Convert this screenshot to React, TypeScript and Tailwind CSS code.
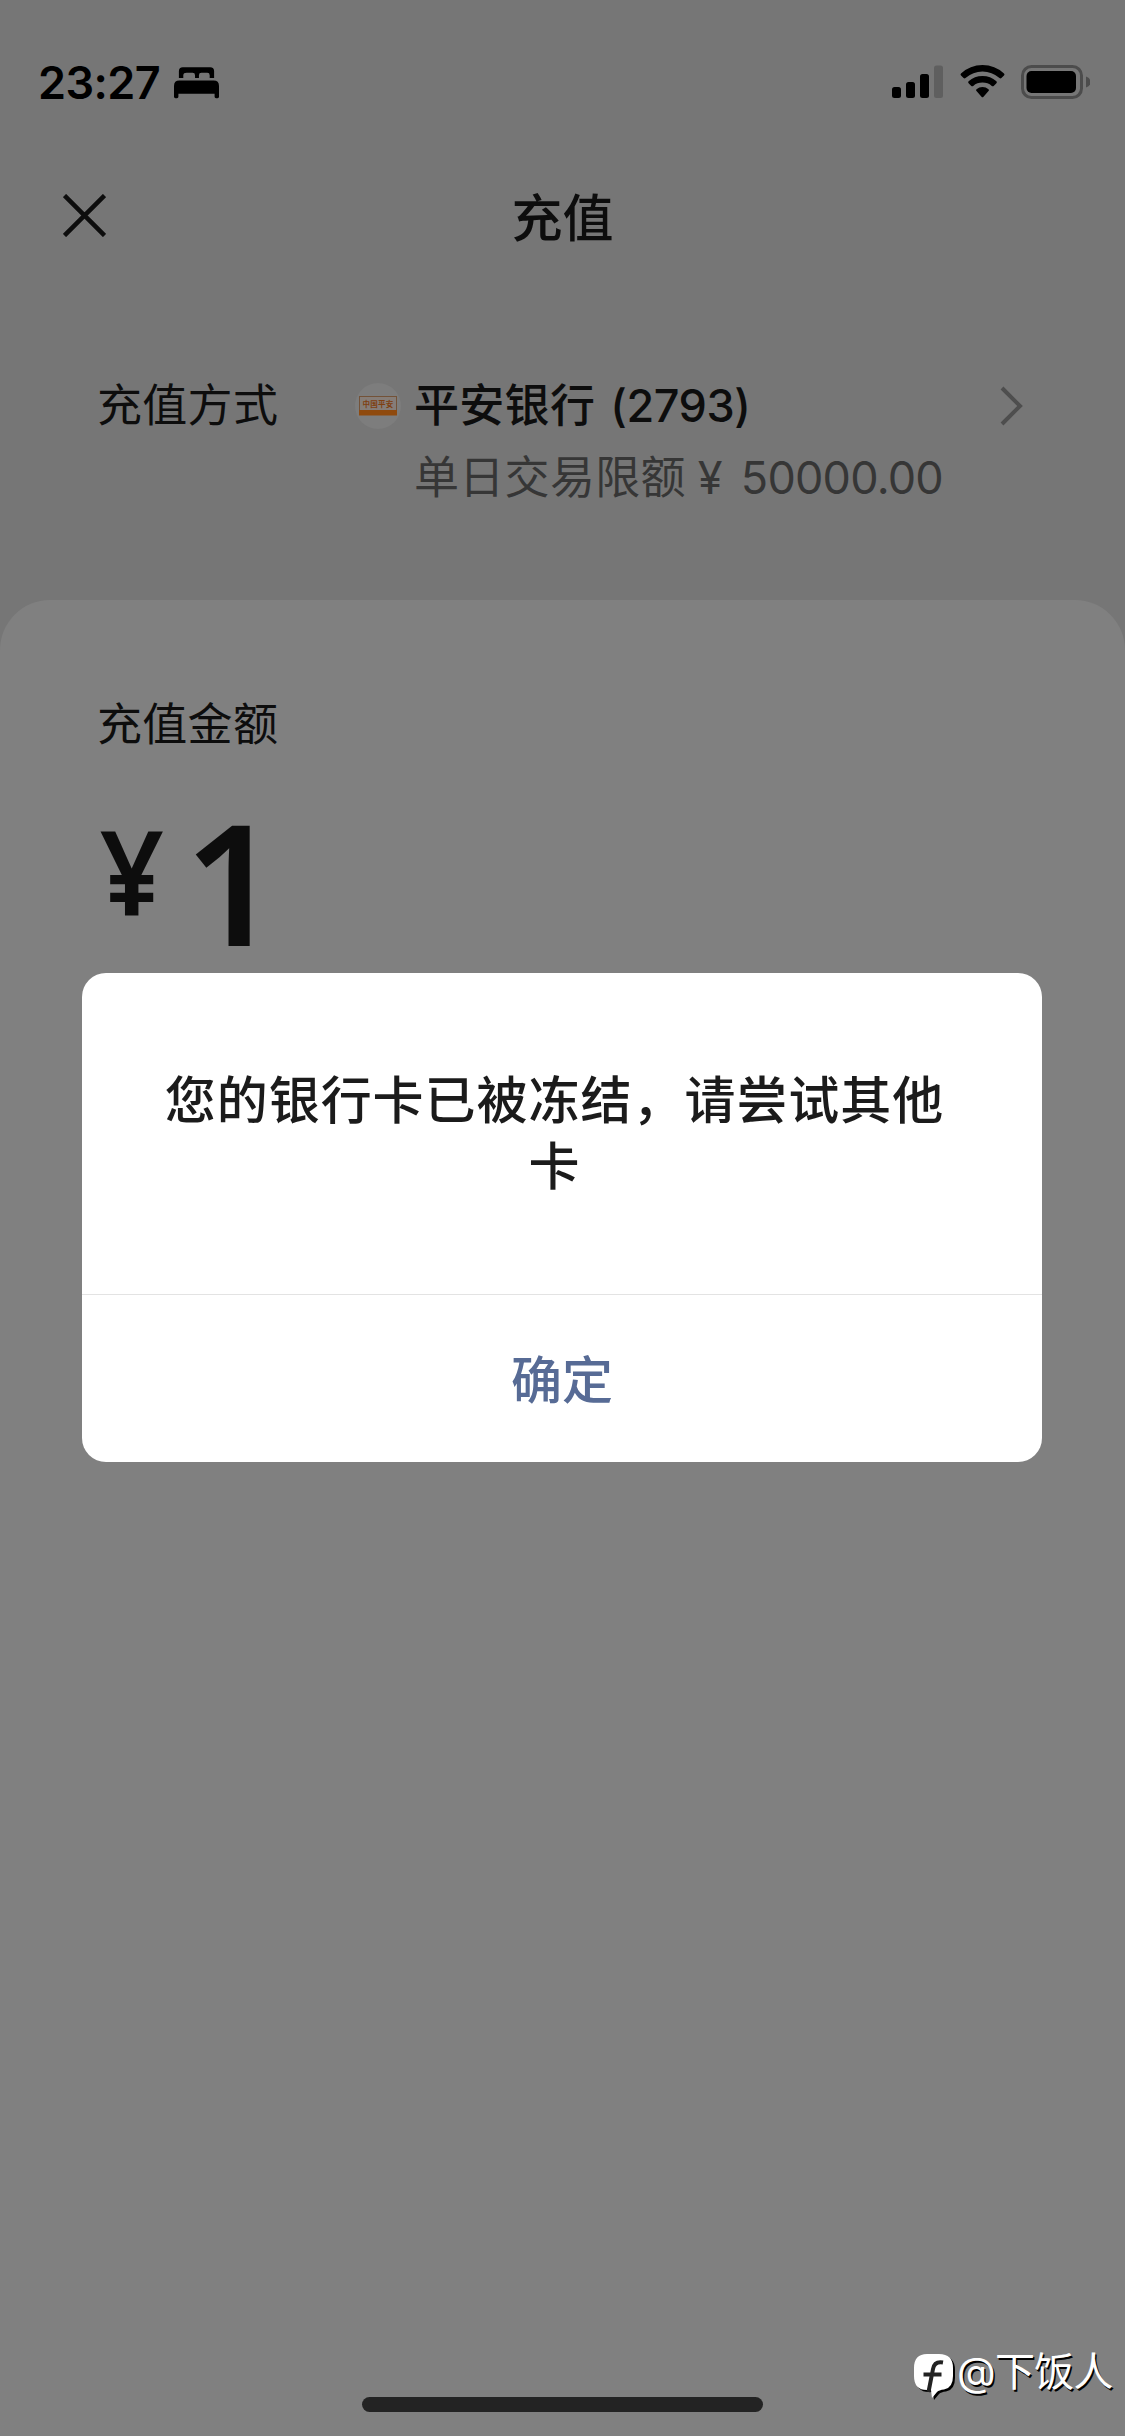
import clsx from "clsx";

const StatusBar = () => {
  return (
    <div className="flex h-[132px] items-start justify-between pt-[60px] pr-[35px] pl-[38px]">
      <div className="flex items-center">
        <span className="w-[136px] text-[45px] leading-[45px] font-semibold tracking-[-0.6px] text-black">23:27</span>
        <svg width="45" height="32" viewBox="0 0 46 32" fill="#000">
          <path d="M5 11V4q0-4 4-4h28q4 0 4 4v7h-4.500V8q0-2.500-2.500-2.500h-6q-2.500 0-2.500 2.500v3h-4V8q0-2.500-2.500-2.500h-6Q9.500 5.500 9.500 8v3z" />
          <path d="M0 30V19q0-5.500 5.500-5.500h35q5.500 0 5.500 5.500v11q0 1.500-1.500 1.500h-1.500q-1.500 0-1.500-1.500v-3H4.500v3q0 1.500-1.500 1.500H1.500Q0 31.500 0 30z" />
        </svg>
      </div>
      <div className="flex items-start pt-[4px]">
        <svg width="51" height="34" viewBox="0 0 51 34">
          <rect x="0" y="23" width="9" height="11" rx="2.500" />
          <rect x="14" y="18" width="9" height="16" rx="2.500" />
          <rect x="28" y="10" width="9" height="24" rx="2.500" />
          <rect x="42" y="1.500" width="9" height="32.500" rx="2.500" fill="#5f5f5f" />
        </svg>
        <svg className="ml-[17px]" width="45" height="34" viewBox="0 0 45 34" fill="#000">
          <path d="M1 9.500Q10 1 22.500 1T44 9.500q1 1 0 2l-2.600 2.600q-.9.900-1.900 0Q32 7.500 22.500 7.500T5.500 14.100q-1 .9-1.900 0L1 11.500q-1-1 0-2z" />
          <path d="M8.600 17.200Q14.500 12 22.500 12t13.900 5.200q1 1 0 2l-2.700 2.700q-.9.900-1.900 0-4-3.300-9.300-3.300t-9.300 3.300q-1 .9-1.900 0l-2.700-2.700q-1-1 0-2z" />
          <path d="M16.500 25.200q2.600-2.100 6-2.100t6 2.100q1 .9 0 1.900l-5 5.700q-1 1-2 0l-5-5.700q-1-1 0-1.900z" />
        </svg>
        <svg className="ml-[16px]" width="69" height="35" viewBox="0 0 69 35">
          <rect x="1.500" y="2.500" width="59" height="31" rx="9" fill="none" stroke="#4c4c4c" strokeWidth="3" />
          <rect x="5.500" y="7" width="49.500" height="22" rx="5" />
          <path d="M65 12.500q4.500 1.500 4.500 5.500T65 23.500z" fill="#4c4c4c" />
        </svg>
      </div>
    </div>
  );
};

const NavBar = () => {
  return (
    <div className="flex h-[170px] items-center justify-between px-[63px]">
      <svg className="-mt-[4px]" width="43" height="43" viewBox="0 0 43 43" stroke="#0d0d0d" strokeWidth="4.500">
        <path d="M1.500 1.500l40 40M41.500 1.500l-40 40" />
      </svg>
      <h1 className="pt-[2px] text-[51px] leading-none font-medium">充值</h1>
      <div className="w-[43px]" />
    </div>
  );
};

const BankLogo = () => {
  return (
    <svg width="48" height="48" viewBox="0 0 48 48">
      <circle cx="24" cy="24" r="23" fill="#7d7d7d" />
      <rect x="5.500" y="14.500" width="37" height="18" fill="#857d78" stroke="#735238" />
      <rect x="5" y="28" width="38" height="5.500" fill="#8f4a0e" />
      <text x="24" y="24.500" textAnchor="middle" fontSize="7.500" fontWeight="700" fill="#7f3f10">中国平安</text>
    </svg>
  );
};

const PayMethod = () => {
  return (
    <div className="flex h-[298px] pt-[76px] pl-[97px] text-[45px] leading-[56px] tracking-[0.3px]">
      <div className="w-[257px]">充值方式</div>
      <div className="w-[60px] pt-[4px]"><BankLogo /></div>
      <div className="w-[586px]">
        <p className="font-medium">平安银行<span className="ml-[15px] tracking-[-0.4px]">(2793)</span></p>
        <p className="mt-[16px] whitespace-nowrap text-[#363636]">单日交易限额<span className="ml-[12px]">¥</span><span className="ml-[18px] tracking-[-0.8px]">50000.00</span></p>
      </div>
      <svg className="mt-[7px]" width="24" height="42" viewBox="0 0 24 42" fill="none" stroke="#4e4e4e" strokeWidth="4">
        <path d="M2 3l18 18L2 39" />
      </svg>
    </div>
  );
};

const AmountPanel = () => {
  return (
    <div className="flex-1 rounded-t-[50px] bg-[#808080] px-[97px] pt-[97px]">
      <p className="text-[45px] leading-[56px] tracking-[0.3px]">充值金额</p>
      <div className="mt-[53px] flex items-start font-['Noto_Sans'] font-semibold">
        <span className="w-[87px] origin-left scale-x-95 pl-[3px] text-[118px] leading-[130px]">¥</span>
        <span className="-mt-[9px] text-[168px] leading-[168px]">1</span>
      </div>
    </div>
  );
};

const Dialog = ({ message, action }: { message: string; action: string }) => {
  return (
    <div className="flex h-[489px] w-[960px] flex-col rounded-[24px] bg-white">
      <p className="h-[322px] border-b border-[#e3e3e3] pt-[95px] pr-[96px] pl-[81px] text-center text-[51px] leading-[66px] font-medium tracking-[0.97px] text-[#1b1b1b]">{message}</p>
      <button className="flex-1 pt-[6px] text-[51px] font-medium text-[#576b95]">{action}</button>
    </div>
  );
};

const Watermark = ({ className }: { className?: string }) => {
  return (
    <div className={clsx("flex items-start text-white", className)}>
      <svg className="mr-[2px]" width="41" height="46" viewBox="0 0 41 46">
        <path d="M15 2h12q14 0 14 14v8q0 12-9 13.500-5 .5-7 2.500l-5 6-1-8h-4Q2 38 2 24v-8Q2 2 15 2z" fill="#000" />
        <path d="M13 0h12q14 0 14 14v8q0 12-9 13.500-5 .5-7 2.500l-5 6-1-8h-4Q0 36 0 22v-8Q0 0 13 0z" fill="#fff" />
        <path d="M29 8.500q-8.500-1.500-10 6.500l-4.500 23M9.500 20.500h18" fill="none" stroke="#222" strokeWidth="4" />
      </svg>
      <span className="-mt-[4px] text-[40px] leading-[44px] tracking-[-0.7px] [text-shadow:1.5px_1.5px_0_#000]">@下饭人</span>
    </div>
  );
};

export default function App() {
  return (
    <div className="relative flex h-[2436px] w-[1125px] flex-col overflow-hidden bg-[#767676] font-[Inter,'Noto_Sans_CJK_SC',sans-serif] text-[#0d0d0d]">
      <StatusBar />
      <NavBar />
      <PayMethod />
      <AmountPanel />
      <div className="absolute top-[973px] left-[82px]">
        <Dialog message="您的银行卡已被冻结，请尝试其他卡" action="确定" />
      </div>
      <div className="absolute bottom-[24px] left-[362px] h-[15px] w-[401px] rounded-full bg-[#232323]" />
      <Watermark className="absolute top-[2354px] left-[914px]" />
    </div>
  );
}
